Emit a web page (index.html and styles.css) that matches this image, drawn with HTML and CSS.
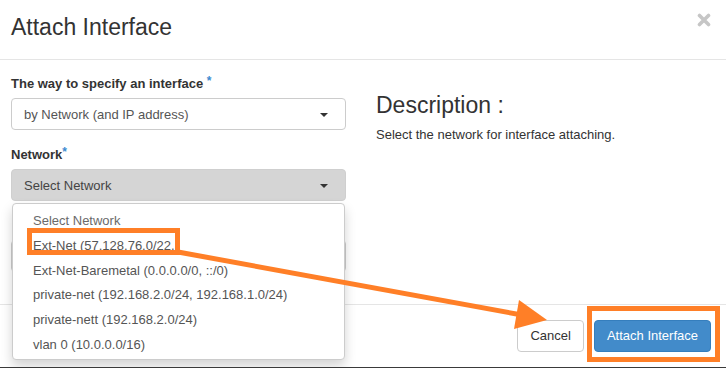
FILE: index.html
```html
<!DOCTYPE html>
<html lang="en">
<head>
    <meta charset="UTF-8">
    <meta name="viewport" content="width=device-width, initial-scale=1.0">
    <title>Attach Interface</title>
    <link rel="stylesheet" href="styles.css">
</head>
<body>

    <div class="modal">
        <div class="modal-header">
            <h4 class="modal-title">Attach Interface</h4>
            <span class="close">
                <svg width="14" height="14" viewBox="0 0 14 14">
                    <path d="M2.5 2.5 L11.5 11.5 M11.5 2.5 L2.5 11.5" stroke="#c6c6c6" stroke-width="3.6" stroke-linecap="round"/>
                </svg>
            </span>
        </div>

        <div class="modal-body">
            <div class="form-col">
                <div class="form-group">
                    <label>The way to specify an interface <span class="req">*</span></label>
                    <div class="select">
                        <span>by Network (and IP address)</span>
                        <span class="caret"></span>
                    </div>
                </div>

                <div class="form-group">
                    <label>Network<span class="req">*</span></label>
                    <div class="select-wrap">
                        <div class="select active">
                            <span>Select Network</span>
                            <span class="caret"></span>
                        </div>
                        <ul class="dropdown">
                            <li class="placeholder">Select Network</li>
                            <li>Ext-Net (57.128.76.0/22,</li>
                            <li>Ext-Net-Baremetal (0.0.0.0/0, ::/0)</li>
                            <li>private-net (192.168.2.0/24, 192.168.1.0/24)</li>
                            <li>private-nett (192.168.2.0/24)</li>
                            <li>vlan 0 (10.0.0.0/16)</li>
                        </ul>
                    </div>
                </div>

                <!-- field hidden under the open dropdown -->
                <div class="form-group">
                    <div class="label-space"></div>
                    <div class="select"></div>
                </div>
            </div>

            <div class="help-col">
                <h3>Description :</h3>
                <p>Select the network for interface attaching.</p>
            </div>
        </div>

        <div class="modal-footer">
            <button class="btn">Cancel</button>
            <button class="btn btn-primary">Attach Interface</button>
        </div>

        <!-- screenshot annotations -->
        <svg class="annotations" width="726" height="368" viewBox="0 0 726 368">
            <rect x="29.5" y="230.5" width="148" height="22" fill="none" stroke="#ff7f27" stroke-width="5"/>
            <rect x="589.5" y="308.5" width="128" height="51" fill="none" stroke="#ff7f27" stroke-width="5"/>
            <line x1="178" y1="252" x2="522" y2="315" stroke="#ff7f27" stroke-width="5"/>
            <polygon points="547,320 519,300 514,329" fill="#ff7f27"/>
        </svg>
    </div>

</body>
</html>
```

FILE: styles.css
```css
body {
    margin: 0;
    background-color: #3a3a3a;
    font-family: "Liberation Sans", Arial, sans-serif;
    font-size: 13px;
    color: #333;
}
.modal {
    position: relative;
    width: 726px;
    height: 367px;
    background: white;
    display: flex;
    flex-direction: column;
    overflow: hidden;
}
.modal-header {
    height: 60px;
    box-sizing: border-box;
    padding: 15px 15px 0 11px;
    border-bottom: 1px solid #e5e5e5;
    display: flex;
    justify-content: space-between;
    align-items: flex-start;
}
.modal-title {
    margin: 0;
    font-size: 23px;
    font-weight: normal;
    line-height: 1.1;
}
.close {
    margin-top: -2px;
}
.modal-body {
    flex: 1;
    padding: 15px 11px 0 11px;
    display: grid;
    grid-template-columns: 335px 1fr;
    gap: 30px;
}
.form-group {
    margin-bottom: 16px;
}
label {
    display: block;
    font-weight: bold;
    line-height: 18px;
    margin-bottom: 5px;
}
.label-space {
    height: 18px;
    margin-bottom: 5px;
}
.req {
    color: #3d8bd0;
    font-size: 12px;
    line-height: 0;
    vertical-align: 3px;
}
.select {
    height: 32px;
    box-sizing: border-box;
    border: 1px solid #ccc;
    border-radius: 4px;
    padding: 0 17px 0 12px;
    display: flex;
    justify-content: space-between;
    align-items: center;
    color: #555;
    background: white;
}
.select.active {
    background-color: #d5d5d5;
    border-color: #cfcfcf;
    color: #444;
}
.caret {
    width: 0;
    height: 0;
    border-left: 4px solid transparent;
    border-right: 4px solid transparent;
    border-top: 4px solid #333;
    margin-top: 2px;
}
.select-wrap {
    position: relative;
}
.dropdown {
    position: absolute;
    top: 34px;
    left: 1px;
    right: 1px;
    z-index: 5;
    margin: 0;
    padding: 5px 0 1px 0;
    list-style: none;
    background: white;
    border: 1px solid #ccc;
    border-radius: 4px;
    box-shadow: 0 6px 12px rgba(0, 0, 0, 0.175);
}
.dropdown li {
    padding: 3px 20px;
    line-height: 18.8px;
    color: #555;
    white-space: nowrap;
}
.dropdown li.placeholder {
    color: #6a6a6a;
}
.help-col h3 {
    margin: 18px 0 8px 0;
    font-size: 23px;
    font-weight: normal;
    line-height: 1.1;
}
.help-col p {
    margin: 0;
    line-height: 18px;
}
.modal-footer {
    border-top: 1px solid #e5e5e5;
    padding: 15px;
    display: flex;
    justify-content: flex-end;
    gap: 10px;
}
.btn {
    font-family: "Liberation Sans", Arial, sans-serif;
    font-size: 13px;
    line-height: 18px;
    padding: 6px 12px;
    border: 1px solid #ccc;
    border-radius: 4px;
    background: white;
    color: #333;
    cursor: pointer;
}
.btn-primary {
    background-color: #428bca;
    border-color: #357ebd;
    color: white;
}
.annotations {
    position: absolute;
    top: 0;
    left: 0;
    z-index: 10;
    pointer-events: none;
}
```
